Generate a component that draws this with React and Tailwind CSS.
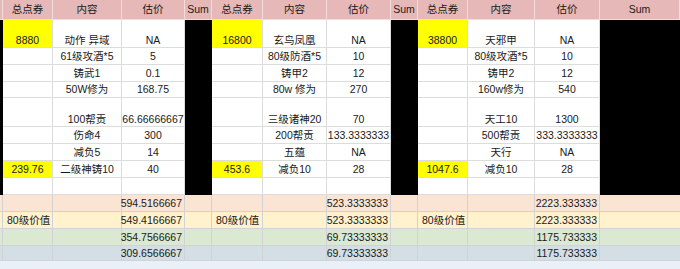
import React from "react";

const FONT = { fontFamily: '"Liberation Sans", Arial, "Noto Sans CJK SC", sans-serif' };

const body = [
  { tall: true, y: true, b: [["8880", "动作 异域", "NA"], ["16800", "玄鸟凤凰", "NA"], ["38800", "天邪甲", "NA"]] },
  { b: [["", "61级攻酒*5", "5"], ["", "80级防酒*5", "10"], ["", "80级攻酒*5", "10"]] },
  { b: [["", "铸武1", "0.1"], ["", "铸甲2", "12"], ["", "铸甲2", "12"]] },
  { b: [["", "50W修为", "168.75"], ["", "80w 修为", "270"], ["", "160w修为", "540"]] },
  { tall: true, b: [["", "100帮贡", "66.66666667"], ["", "三级诸神20", "70"], ["", "天工10", "1300"]] },
  { b: [["", "伤命4", "300"], ["", "200帮贡", "133.3333333"], ["", "500帮贡", "333.3333333"]] },
  { b: [["", "减负5", "14"], ["", "五蕴", "NA"], ["", "天行", "NA"]] },
  { y: true, b: [["239.76", "二级神铸10", "40"], ["453.6", "减负10", "28"], ["1047.6", "减负10", "28"]] },
  { b: [["", "", ""], ["", "", ""], ["", "", ""]] },
];

const bottom = [
  { bg: "bg-[#fce4d2]", label: false, v: ["594.5166667", "523.3333333", "2223.333333"] },
  { bg: "bg-[#fff2cc]", label: true, v: ["549.4166667", "523.3333333", "2223.333333"] },
  { bg: "bg-[#dbe9d3]", label: false, v: ["354.7566667", "69.73333333", "1175.733333"] },
  { bg: "bg-[#d3dfe5]", label: false, v: ["309.6566667", "69.73333333", "1175.733333"] },
];

function HeaderRow() {
  const hc = "bg-[#e6b8b7] border-r border-b border-[#f3dcdc] flex items-center justify-center";
  const cells = [<div key="s" className={hc} />];
  for (let i = 0; i < 3; i++) {
    cells.push(<div key={"a" + i} className={hc}>总点券</div>);
    cells.push(<div key={"b" + i} className={hc}>内容</div>);
    cells.push(<div key={"c" + i} className={hc}>估价</div>);
    cells.push(<div key={"d" + i} className={hc}>Sum</div>);
  }
  return cells;
}

function BodyRow({ row, idx }) {
  const align = row.tall ? "items-end pb-[2px]" : "items-center";
  const cells = [<div key="s" className="bg-black" />];
  row.b.forEach((blk, i) => {
    const [a, b, c] = blk;
    const aBg = a ? "bg-[#ffff00]" : "bg-white";
    cells.push(
      <div key={"a" + i} className={`${aBg} border-r border-b border-[#dcdcdc] flex justify-center ${align}`}>{a}</div>
    );
    cells.push(
      <div key={"b" + i} className={`bg-white border-r border-b border-[#dcdcdc] flex justify-center whitespace-nowrap ${align}`}>{b}</div>
    );
    cells.push(
      <div key={"c" + i} className={`bg-white border-r border-b border-[#dcdcdc] flex justify-center whitespace-nowrap ${align}`}>{c}</div>
    );
    cells.push(<div key={"d" + i} className="bg-black" />);
  });
  return cells;
}

function BottomRow({ row }) {
  const base = `${row.bg} border-r border-b border-[#cfd3d6] flex items-center whitespace-nowrap`;
  const cells = [<div key="s" className={base} />];
  row.v.forEach((v, i) => {
    cells.push(<div key={"a" + i} className={`${base} pl-[4px]`}>{row.label ? "80级价值" : ""}</div>);
    cells.push(<div key={"b" + i} className={base} />);
    cells.push(<div key={"c" + i} className={`${base} justify-end pr-[2px]`}>{v}</div>);
    cells.push(<div key={"d" + i} className={i === 2 ? `${row.bg} border-b border-[#cfd3d6]` : base} />);
  });
  return cells;
}

export default function App() {
  return (
    <div className="w-[680px] h-[269px] overflow-hidden bg-[#eaf0f8] text-[#1a1a1a] text-[10.5px] leading-none" style={FONT}>
      <div className="grid grid-cols-[3px_50px_69px_63px_27px_51px_64px_64px_27px_50px_67px_65px_80px] grid-rows-[20px_28px_17px_17px_16px_29px_17px_17px_17px_17px_17px_17px_17px_15px]">
        <HeaderRow />
        {body.map((r, i) => (
          <BodyRow key={"r" + i} row={r} idx={i} />
        ))}
        {bottom.map((r, i) => (
          <BottomRow key={"bt" + i} row={r} />
        ))}
      </div>
    </div>
  );
}
